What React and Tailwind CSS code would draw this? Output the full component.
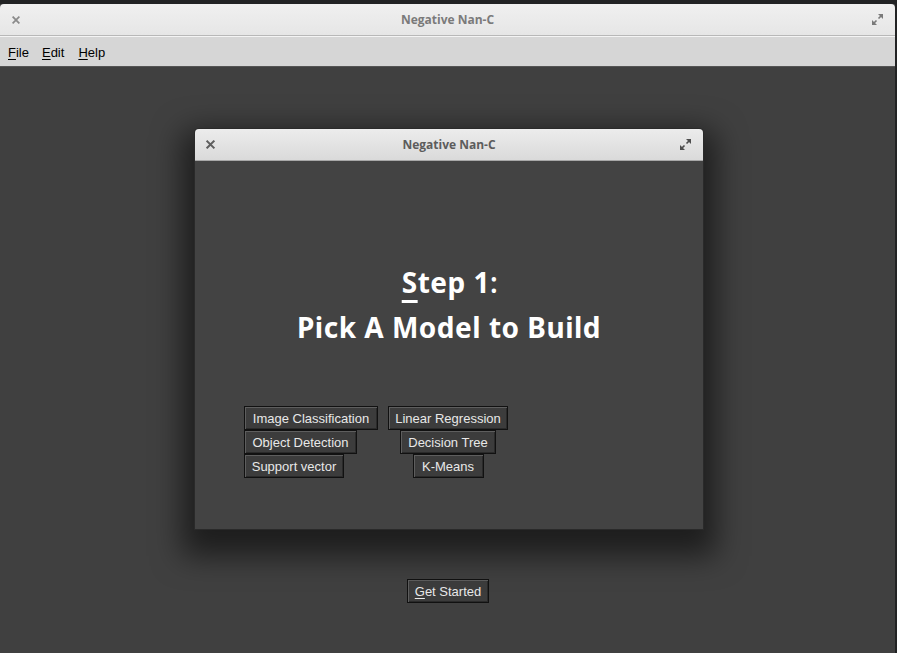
import React from "react";

const CloseIcon = ({ color = "#8a8a8a", size = 9 }) => (
  <svg width={size} height={size} viewBox="0 0 10 10">
    <path d="M1.5 1.5 L8.5 8.5 M8.5 1.5 L1.5 8.5" stroke={color} strokeWidth="2.2" strokeLinecap="square" />
  </svg>
);

const MaxIcon = ({ color = "#7a7a7a" }) => (
  <svg width="13" height="13" viewBox="0 0 13 13">
    <path d="M7 1 H12 V6 Z" fill={color} />
    <path d="M6 12 H1 V7 Z" fill={color} />
    <path d="M10.5 2.5 L7.5 5.5 M2.5 10.5 L5.5 7.5" stroke={color} strokeWidth="1.6" />
  </svg>
);

const Btn = ({ children, className = "" }) => (
  <button
    className={`h-[24px] flex items-center justify-center bg-[#3c3c3c] text-[#e8e8e8] text-[13px] border border-[#111] shadow-[inset_1px_1px_0_#5e5e5e,inset_-1px_-1px_0_#2a2a2a] whitespace-nowrap leading-none ${className}`}
    style={{ fontFamily: '"Liberation Sans", Arial, sans-serif' }}
  >
    {children}
  </button>
);

export default function App() {
  return (
    <div className="w-[897px] h-[653px] bg-[#222324] overflow-hidden relative">
      <div className="absolute left-0 top-[4px] w-[895px] h-[649px] flex flex-col bg-[#404040]">
        {/* title bar */}
        <div className="h-[32px] flex items-center justify-between px-[10px] rounded-t-[4px] bg-gradient-to-b from-[#f0f0f0] to-[#e6e6e6] border-b border-[#b8b8b8] relative">
          <div className="w-[12px] flex justify-center"><CloseIcon size={8} /></div>
          <div
            className="absolute inset-0 flex items-center justify-center text-[12px] font-bold text-[#7a7a7a]"
            style={{ fontFamily: '"Open Sans", "Noto Sans", sans-serif' }}
          >
            Negative Nan-C
          </div>
          <div className="pr-[1px]"><MaxIcon /></div>
        </div>
        {/* menu bar */}
        <div
          className="h-[31px] bg-[#d6d6d6] border-t border-[#f4f4f4] border-b border-b-[#555] flex items-center pt-[2px] px-[8px] gap-[13px] text-[13px] text-black"
          style={{ fontFamily: '"Liberation Sans", Arial, sans-serif' }}
        >
          <span><span className="underline underline-offset-2">F</span>ile</span>
          <span><span className="underline underline-offset-2">E</span>dit</span>
          <span className="ml-[1px]"><span className="underline underline-offset-2">H</span>elp</span>
        </div>
        {/* main area */}
        <div className="flex-1 flex flex-col items-center pt-[512px] pl-[1px]">
          <Btn className="w-[82px]">
            <span><span className="underline underline-offset-2">G</span>et Started</span>
          </Btn>
        </div>

        {/* dialog */}
        <div className="absolute left-[194px] top-[124px] w-[510px] h-[402px] flex flex-col border border-[#2a2a2a] rounded-t-[4px] shadow-[0_14px_30px_12px_rgba(0,0,0,0.55)] bg-[#434343]">
          <div className="h-[32px] relative flex items-center justify-between px-[10px] rounded-t-[4px] bg-gradient-to-b from-[#ececec] to-[#dadada] border-b border-[#a8a8a8]">
            <div className="w-[10px] flex justify-center"><CloseIcon color="#5e5e5e" size={9} /></div>
            <div
              className="absolute inset-0 flex items-center justify-center text-[12px] font-bold text-[#5c5c5c]"
              style={{ fontFamily: '"Open Sans", "Noto Sans", sans-serif' }}
            >
              Negative Nan-C
            </div>
            <div className="pr-[1px]"><MaxIcon color="#4e4e4e" /></div>
          </div>
          <div className="flex-1 flex flex-col items-center">
            <div
              className="mt-[99px] flex flex-col items-center text-white font-bold text-[28px] leading-[45px] tracking-[0.5px]"
              style={{ fontFamily: '"Noto Sans", sans-serif' }}
            >
              <div className="pl-[2px]"><span className="underline decoration-[3px] underline-offset-[7px]">S</span>tep 1<span className="font-semibold">:</span></div>
              <div>Pick A Model to Build</div>
            </div>
            <div className="mt-[56px] self-start ml-[49px] grid grid-cols-[134px_120px] gap-x-[10px]">
              <Btn className="justify-self-start w-[134px]">Image Classification</Btn>
              <Btn className="justify-self-center w-[120px]">Linear Regression</Btn>
              <Btn className="justify-self-start w-[113px]">Object Detection</Btn>
              <Btn className="justify-self-center w-[96px]">Decision Tree</Btn>
              <Btn className="justify-self-start w-[100px]">Support vector</Btn>
              <Btn className="justify-self-center w-[71px]">K-Means</Btn>
            </div>
          </div>
        </div>
      </div>
    </div>
  );
}
